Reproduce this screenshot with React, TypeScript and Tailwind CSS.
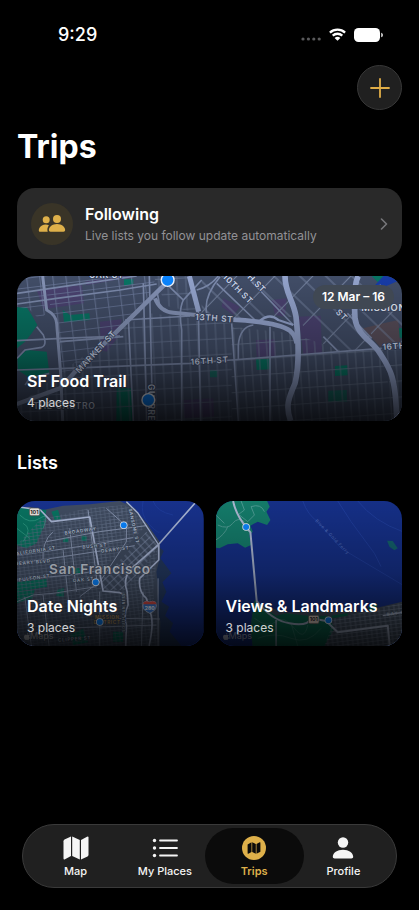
import React from 'react'

type Tab = {
  label: string
  icon: React.ReactNode
  active?: boolean
}

type PinProps = { x: number; y: number; r: number }

function Pin({ x, y, r }: PinProps) {
  return (
    <g>
      <circle cx={x} cy={y} r={r + r / 4} fill="#eef4ff" />
      <circle cx={x} cy={y} r={r} fill="#0a84ff" />
    </g>
  )
}

function StatusBar() {
  return (
    <div className="flex h-[65px] items-center justify-between pt-1 pr-9 pl-[58px]">
      <span className="text-lg leading-6 font-medium">9:29</span>
      <div className="flex items-center gap-2">
        <svg width="20" height="4" viewBox="0 0 20 4" className="mt-2" fill="#5a5a5c" aria-hidden="true">
          <circle cx="2" cy="2" r="1.6" />
          <circle cx="7.4" cy="2" r="1.6" />
          <circle cx="12.8" cy="2" r="1.6" />
          <circle cx="18.2" cy="2" r="1.6" />
        </svg>
        <svg width="17" height="13" viewBox="0 0 17 13" aria-hidden="true">
          <g fill="none" stroke="#fff" strokeWidth="2.3">
            <path d="M.9 4.6C5.1.7 11.9.7 16.1 4.6" />
            <path d="M3.7 7.6c2.7-2.5 6.9-2.5 9.6 0" />
          </g>
          <path d="M8.5 12.8 5.6 9.9c1.7-1.5 4.1-1.5 5.8 0z" fill="#fff" />
        </svg>
        <svg width="29" height="14" viewBox="0 0 29 14" fill="#fff" aria-hidden="true">
          <rect width="26" height="14" rx="4.5" />
          <path d="M27.3 4.7c2 .7 2 3.9 0 4.6z" />
        </svg>
      </div>
    </div>
  )
}

// streets are drawn at three units to the pixel
function MissionMap() {
  return (
    <svg
      className="absolute inset-0 h-full w-full"
      viewBox="21 18 1155 435"
      preserveAspectRatio="xMidYMid slice"
      fontFamily="Inter, sans-serif"
      aria-hidden="true"
    >
      <defs>
        <pattern id="west" width="39" height="29" patternUnits="userSpaceOnUse" patternTransform="rotate(-7)">
          <path d="M0 1h39M8 0v29" stroke="#6b7a9c" strokeWidth="2.5" />
        </pattern>
        <pattern id="mid" width="27" height="47" patternUnits="userSpaceOnUse" patternTransform="rotate(-3)">
          <path d="M0 4h27M12 0v47" stroke="#64728f" strokeWidth="2.5" />
        </pattern>
        <pattern id="east" width="24" height="48" patternUnits="userSpaceOnUse" patternTransform="rotate(-4)">
          <path d="M0 30h24M8 0v48" stroke="#66748f" strokeWidth="2.5" />
        </pattern>
        <pattern id="soma" width="82" height="54" patternUnits="userSpaceOnUse" patternTransform="rotate(44)">
          <path d="M0 3h82M10 0v54" stroke="#74829f" strokeWidth="3" />
        </pattern>
      </defs>
      <rect x="21" y="18" width="1155" height="435" fill="#414d67" />

      <g fill="#4a4270">
        <path d="M80 60 215 45 222 100 100 118z" />
        <path d="M230 45 385 18 330 18 225 35z" />
        <path d="M270 155 335 148 325 200 290 245 272 240z" />
        <path d="M738 210 795 208 797 260 740 262z" />
        <path d="M865 140 932 137 936 250 880 252z" />
        <path d="M785 90 830 85 825 140 795 135z" />
        <path d="M520 390 610 385 612 440 522 445z" />
        <path d="M640 85 690 110 670 135 635 110z" />
      </g>
      <g fill="#087363">
        <path d="M21 112 50 112 65 135 82 165 65 190 45 215 21 235z" />
        <path d="M22 265 50 240 110 245 118 310 60 325 24 300z" />
        <path d="M158 120 180 135 238 130 240 150 162 157z" />
        <path d="M342 28h28v15l-28 4z" />
        <path d="M738 268 780 266 782 298 740 300z" />
        <path d="M975 288 1012 286 1013 316 975 318z" />
        <path d="M320 355h45l2 98h-48z" />
        <path d="M955 362 1010 360 1011 395 955 396z" opacity=".7" />
        <path d="M1155 175h21v28h-21zM1085 18h40l-20 20z" />
        <path d="M600 300h22v22h-22z" opacity=".7" />
      </g>
      <path d="M1120 18h56v10l-56 24-25-6z" fill="#173ba5" />
      <path d="M1060 175 1120 160 1165 150 1170 215 1110 230z" fill="#574d59" />

      <path d="M95 18H440L400 120 330 170 200 300 155 310 135 155z" fill="url(#west)" />
      <path d="M21 18H95L112 125 90 150 60 120 21 110z" fill="url(#west)" />
      <path d="M150 310 340 170 420 130 665 160V453H30V400z" fill="url(#mid)" />
      <path d="M665 170 845 190 990 240 1120 240 1150 453H665z" fill="url(#east)" />
      <path d="M1130 240h46V453h-30z" fill="url(#east)" />
      <path d="M430 18h110l20 110-90-20z" fill="url(#mid)" />
      <path d="M575 18H1040L1030 130 1110 240 960 240 850 140 700 150 575 130z" fill="url(#soma)" />
      <path d="M1045 18h50L1176 140V230L1110 230 1040 130z" fill="url(#soma)" />

      <g fill="none" stroke="#7c8aac" strokeWidth="5">
        <path d="M21 70 240 38 380 18M21 102 140 85 330 60 440 42" />
        <path d="M21 212 155 205 330 198M150 215 340 200M355 143 370 453M418 18 428 453M400 40 410 453" />
        <path d="M21 300 150 296 540 280 665 270 1115 235" />
        <path d="M345 150 540 138M478 50 520 90 575 30M440 60 450 110" />
        <path d="M665 160 685 453M565 120 572 453M520 90Q505 120 515 180V453" />
        <path d="M685 270V225Q690 170 730 165M780 170V453" />
        <path d="M21 265 45 240 95 232Q112 225 100 195L80 170M118 310 60 325 45 345" />
        <path d="M590 130Q580 80 630 20M560 60Q600 50 625 18" />
        <path d="M720 30 850 165M620 40 735 150M940 200 985 245M1012 130 1085 205" />
      </g>
      <g fill="none" stroke="#8492b5" strokeWidth="9" strokeLinejoin="round">
        <path d="M98 18 110 120Q138 135 140 160L152 310 158 453" />
        <path d="M473 35 320 185 200 300 150 355 21 402" strokeWidth="13" />
        <path d="M435 85Q450 125 490 128L580 137" strokeWidth="12" />
      </g>
      <g fill="none" stroke="#93a3cc" strokeWidth="17" strokeLinejoin="round">
        <path d="M538 18 566 125" strokeWidth="15" />
        <path d="M825 18C825 70 850 90 858 140 868 230 867 290 855 340 835 385 826 410 842 453" />
        <path d="M670 149C740 153 810 160 840 182 855 195 858 205 860 220" strokeWidth="14" />
        <path d="M1045 18C1032 40 1032 90 1035 145 1040 195 1090 215 1110 250 1140 295 1158 320 1160 453" />
        <path d="M750 152Q780 128 805 150L850 165" strokeWidth="7" />
      </g>

      <g fill="#cfd9ee" stroke="#394660" strokeWidth="5" paintOrder="stroke" fontSize="25" fontWeight="600" letterSpacing="2">
        <text x="237" y="24">OAK ST</text>
        <text transform="translate(208 311) rotate(-47)">MARKET ST</text>
        <text transform="translate(555 149) rotate(4)">13TH ST</text>
        <text transform="translate(542 285) rotate(-4)">16TH ST</text>
        <text transform="translate(637 22) rotate(45)">10TH ST</text>
        <text transform="translate(680 -8) rotate(45)">11TH ST</text>
        <text transform="translate(976 128) rotate(45)">ST</text>
        <text transform="translate(1118 240) rotate(-4)">16TH ST</text>
        <text transform="translate(414 342) rotate(90)">GUERRERO</text>
        <text x="1054" y="123" fontSize="28" fill="#e7edf8">MISSION BAY</text>
        <text x="70" y="416" fontSize="26">THE CASTRO</text>
      </g>
      <Pin x={473} y={30} r={17} />
      <Pin x={415} y={390} r={17} />
    </svg>
  )
}

function CityMap() {
  return (
    <svg
      className="absolute inset-0 h-full w-full"
      viewBox="21 18 561 435"
      preserveAspectRatio="xMidYMid slice"
      fontFamily="Inter, sans-serif"
      aria-hidden="true"
    >
      <defs>
        <pattern id="blocks" width="13" height="10" patternUnits="userSpaceOnUse" patternTransform="rotate(-7)">
          <path d="M0 1h13M3 0v10" stroke="#606e86" strokeWidth="1.5" />
        </pattern>
        <pattern id="market" width="18" height="18" patternUnits="userSpaceOnUse" patternTransform="rotate(-43)">
          <path d="M0 1h18M3 0v18" stroke="#8593b0" strokeWidth="2" />
        </pattern>
      </defs>
      <rect x="21" y="18" width="561" height="435" fill="#17318b" />
      <g fill="none" stroke="#2140a0" strokeWidth="2">
        <path d="M400 18Q390 60 420 90T450 110M430 18Q440 50 490 60" />
      </g>
      <path d="M440 150 462 168 452 190 485 235 458 262 470 290 455 320 478 335 466 362 490 385 480 410 515 453H430z" fill="#23385f" />
      <path
        d="M21 40 60 35 100 45 160 32 240 28 330 18 375 40 410 85 450 140 450 190 440 230 446 290 440 330 452 380 450 453H21z"
        fill="#3f4b60"
      />
      <g fill="#08715f">
        <path d="M21 35 110 45 100 100 80 145 50 160 21 150z" />
        <path d="M21 260 110 252 112 275 21 290z" />
        <path d="M21 290 75 285 68 310 21 325z" />
        <path d="M160 128h16v14h-16zM215 122h16v16h-16zM186 222l22-4 4 16-20 4zM142 285l20-6v28l-22-4zM125 50l20-6 8 30-18 2z" />
        <path d="M180 420l40-18 15 40-45 8zM310 410h30v30h-30z" />
      </g>
      <path d="M90 75 240 38 355 30 445 150 430 290 450 453H21V150z" fill="url(#blocks)" />
      <path d="M350 18 415 90 450 155 345 285 275 285 270 262z" fill="#3f4b60" />
      <path d="M350 30 410 90 360 145 272 230 262 100z" fill="url(#blocks)" />
      <path d="M410 110 448 155 345 285 275 285 272 258z" fill="url(#market)" />
      <g fill="none" stroke="#3aa38b" strokeWidth="2">
        <path d="M30 60Q60 90 90 70T100 100M40 140Q70 100 40 85M21 100 60 130" />
      </g>

      <g fill="none" stroke="#8592ad" strokeWidth="3">
        <path d="M21 205 160 185 375 152M21 182 240 150 370 128M110 140 270 110 410 92M21 255 180 240 260 228" />
        <path d="M160 165 180 350M180 100 200 290M235 45 262 262M290 40 340 85M21 320 70 300 130 295 260 275" />
        <path d="M45 305 65 453M100 300 118 453M270 290V453M400 290 395 453M350 100V140L272 258 210 305" />
        <path d="M130 110Q95 140 100 200M300 370 450 372M150 400 440 390M445 250V453" />
      </g>
      <g fill="none" stroke="#a7b4d3" strokeWidth="5" strokeLinejoin="round">
        <path d="M21 35 92 45 125 80 240 66 280 288 330 293 345 300" />
        <path d="M556 24 445 150 365 220Q338 250 352 290L355 330Q340 360 350 390L348 453" />
        <path d="M447 150V195L390 250Q385 290 410 310L424 360Q432 390 418 453" />
        <path d="M350 20 385 55 447 150" strokeWidth="4" />
      </g>

      <g fill="#b4c0d6" stroke="#394559" strokeWidth="3" paintOrder="stroke" fontSize="14" fontWeight="600" letterSpacing="2">
        <text transform="translate(165 119) rotate(-8)">BROADWAY</text>
        <text transform="translate(218 161) rotate(-5)">BUSH ST</text>
        <text transform="translate(274 173) rotate(-7)">GEARY ST</text>
        <text transform="translate(8 183) rotate(-9)">CALIFORNIA ST</text>
        <text transform="translate(16 211) rotate(-5)">GEARY BLVD</text>
        <text transform="translate(28 260) rotate(-8)">FULTON ST</text>
        <text transform="translate(190 262) rotate(-6)">OAK ST</text>
        <text transform="translate(357 42) rotate(78)" fontSize="13">SANSOME ST</text>
        <text transform="translate(145 440) rotate(-4)">CLIPPER ST</text>
        <text transform="translate(346 410) rotate(-90)" fontSize="10">SOUTH VAN NESS</text>
        <text x="256" y="371" fill="#c19a5b">MISSION</text>
        <text x="252" y="387" fill="#c19a5b">DISTRICT</text>
      </g>
      <text x="118" y="236" fontSize="41" fontWeight="600" letterSpacing="2" fill="#c6ccd6" stroke="#3b465b" strokeWidth="4" paintOrder="stroke">
        San Francisco
      </text>
      <rect x="59" y="39" width="31" height="23" rx="5" fill="#e8e4dc" stroke="#4d4d4d" strokeWidth="2" />
      <text x="74" y="56" textAnchor="middle" fontSize="16" fontWeight="700" fill="#222">
        101
      </text>
      <path d="M402 322Q410 316 419 321 429 316 438 322 446 345 420 355 392 344 402 322z" fill="#3974c9" stroke="#cfd7e6" strokeWidth="2" />
      <path d="M400 328 402 322Q410 316 419 321 429 316 438 322L440 328z" fill="#d24a43" />
      <text x="420" y="344" textAnchor="middle" fontSize="15" fontWeight="700" fill="#fff">
        280
      </text>
      <Pin x={342} y={91} r={9} />
      <Pin x={258} y={262} r={9} />
      <Pin x={270} y={381} r={9} />
    </svg>
  )
}

function BayMap() {
  return (
    <svg
      className="absolute inset-0 h-full w-full"
      viewBox="24 18 561 435"
      preserveAspectRatio="xMidYMid slice"
      fontFamily="Inter, sans-serif"
      aria-hidden="true"
    >
      <defs>
        <pattern id="marina" width="15" height="11" patternUnits="userSpaceOnUse" patternTransform="rotate(-7)">
          <path d="M0 1h15M3 0v11" stroke="#77849c" strokeWidth="2" />
        </pattern>
      </defs>
      <rect x="24" y="18" width="561" height="435" fill="#152f86" />
      <g fill="none" stroke="#2443a0" strokeWidth="2">
        <path d="M285 18Q300 60 330 80L400 160 585 270M390 18 430 80 500 175 520 215M450 18Q500 80 585 110" />
      </g>
      <path
        d="M24 18H178L186 35 176 50 188 75 178 90 150 80 128 92 135 110 125 120 130 150 112 158 90 145 60 148 35 160 24 158z"
        fill="#147a69"
      />
      <path d="M538 137 555 138 570 160 560 166 545 155z" fill="#135f6a" />
      <g fill="none" stroke="#4c9990" strokeWidth="3">
        <path d="M30 90Q60 105 75 85T110 80M24 135Q50 120 60 95M95 60 120 80 140 60 130 35Q160 25 170 50M100 18 110 45 90 60M24 60 50 85" />
      </g>
      <path d="M140 320 165 330 230 352 300 350 380 345 460 350 520 335 585 320V453H135L128 400z" fill="#424e60" />
      <path d="M140 315 165 335 205 362 235 355 300 362 360 362 380 400 350 453H135L128 400z" fill="#0c6952" />
      <path d="M380 370 470 352 585 322V453H350z" fill="url(#marina)" />
      <path d="M480 335l30-8-5 20-20 2zM370 362l50-8v8l-45 8z" fill="#0c6952" />
      <g fill="none" stroke="#3f8a79" strokeWidth="2">
        <path d="M140 370Q180 400 205 380T260 400 300 390M150 430Q200 410 250 430T340 400M250 385 270 453" />
      </g>
      <g fill="none" stroke="#a9b5cf" strokeWidth="6" strokeLinejoin="round">
        <path d="M76 18Q85 60 115 96L128 112 147 320 160 340" />
        <path d="M147 318Q190 375 245 385T310 370L355 378 390 412 540 392 546 453" />
        <path d="M205 375V453M525 362 585 352" strokeWidth="4" />
      </g>
      <text transform="translate(322 78) rotate(46)" fontSize="13" letterSpacing="2" fill="#4f6bb8">
        Blue &amp; Gold Ferry
      </text>
      <text transform="translate(538 363) rotate(-8)" fontSize="13" fontWeight="600" letterSpacing="3" fill="#b4c0d6">
        BAY ST
      </text>
      <rect x="302" y="361" width="32" height="25" rx="5" fill="#e6d3c9" stroke="#4d4d4d" strokeWidth="2" />
      <text x="318" y="379" textAnchor="middle" fontSize="16" fontWeight="700" fill="#222">
        101
      </text>
      <Pin x={115} y={96} r={9} />
      <Pin x={362} y={376} r={9} />
    </svg>
  )
}

type MapCardProps = {
  title: string
  places: string
  map: React.ReactNode
  badge?: string
  credit?: boolean
}

function MapCard({ title, places, map, badge, credit }: MapCardProps) {
  return (
    <a href="#" className="relative flex h-[145px] min-w-0 flex-1 flex-col justify-end overflow-hidden rounded-[18px] px-[10px] pb-2">
      {map}
      {credit ? (
        <span className="absolute bottom-1 left-[7px] flex items-center text-[9px] leading-3 text-white/70">
          <svg width="6" height="7" viewBox="0 0 12 14" fill="currentColor" aria-hidden="true">
            <path d="M8.6 0C8.8 1.6 7.4 3 6 3 5.8 1.500 7.300.2 8.600 0z" />
            <path d="M11.300 4.800C9.300 6 9.600 8.900 11.900 9.700 10.900 12.300 9.600 14 8.300 14c-.8 0-1.200-.5-2.200-.5S4.700 14 3.900 14C2 14 0 10.600 0 7.900 0 3.900 3.100 2.900 5 3.900c.8.4 1.400.4 2.300 0 1.400-.6 3.100-.3 4 .9z" />
          </svg>
          Maps
        </span>
      ) : null}
      <div className="absolute inset-0 bg-gradient-to-b from-black/0 via-black/25 to-black/80" />
      {badge ? (
        <span className="absolute top-[9px] right-2 rounded-full bg-[#404853] px-[9px] py-1 text-xs leading-4 font-semibold">
          {badge}
        </span>
      ) : null}
      <h3 className="relative truncate text-base leading-6 font-semibold">{title}</h3>
      <p className="relative text-xs leading-5 text-white/80">{places}</p>
    </a>
  )
}

function MapIcon() {
  return (
    <svg width="26" height="24" viewBox="0 0 26 24" fill="currentColor" aria-hidden="true">
      <path d="M.5 5.2Q.5 4 1.5 3.5L8 .4V20L2 23.3Q.5 24 .5 22.4z" />
      <path d="M9.2.4 16.8 4V23.6L9.2 20z" />
      <path d="M18 4 24 .7Q25.5 0 25.5 1.6V18.8Q25.5 20 24.5 20.5L18 23.6z" />
    </svg>
  )
}

function ListIcon() {
  return (
    <svg width="26" height="24" viewBox="0 0 26 24" fill="currentColor" aria-hidden="true">
      <circle cx="2.5" cy="4.5" r="1.7" />
      <circle cx="2.5" cy="12" r="1.7" />
      <circle cx="2.5" cy="19.5" r="1.7" />
      <path d="M8 4.5h17M8 12h17M8 19.5h17" stroke="currentColor" strokeWidth="1.8" strokeLinecap="round" />
    </svg>
  )
}

function TripsIcon() {
  return (
    <svg width="26" height="24" viewBox="0 0 26 24" aria-hidden="true">
      <circle cx="13" cy="12" r="12" fill="currentColor" />
      <g fill="#0b0b0b">
        <path d="M6.6 8.4 10.5 6.2V15.9L7.3 17.7Q6.6 18 6.6 17.3z" />
        <path d="M11.2 6.2 14.8 8.1V17.8L11.2 15.9z" />
        <path d="M15.5 8.1 18.7 6.3Q19.4 6 19.4 6.8V15.7L15.5 17.8z" />
      </g>
    </svg>
  )
}

function ProfileIcon() {
  return (
    <svg width="26" height="24" viewBox="0 0 26 24" fill="currentColor" aria-hidden="true">
      <circle cx="13" cy="6.5" r="5.2" />
      <path d="M2.8 20.8C2.8 16.8 7.3 13.7 13 13.7s10.2 3.1 10.2 7.1c0 1.2-.7 1.7-1.9 1.7H4.7c-1.2 0-1.9-.5-1.9-1.7z" />
    </svg>
  )
}

const tabs: Tab[] = [
  { label: 'Map', icon: <MapIcon /> },
  { label: 'My Places', icon: <ListIcon /> },
  { label: 'Trips', icon: <TripsIcon />, active: true },
  { label: 'Profile', icon: <ProfileIcon /> },
]

function TabBar() {
  return (
    <nav className="mx-[22px] mt-auto mb-[22px] flex h-16 rounded-full border border-[#3a3a3a] bg-[#202020] px-2 py-[3px]">
      {tabs.map((t) => (
        <button
          key={t.label}
          type="button"
          aria-current={t.active ? 'page' : undefined}
          className={
            'flex flex-1 basis-0 flex-col items-center gap-[3px] rounded-full pt-2 ' +
            (t.active ? '-mx-[5px] bg-[#0b0b0b] px-[5px] text-[#deb04a]' : 'text-[#f5f5f5]')
          }
        >
          {t.icon}
          <span className={'text-[11px] leading-4 whitespace-nowrap ' + (t.active ? 'font-semibold' : 'font-medium')}>
            {t.label}
          </span>
        </button>
      ))}
    </nav>
  )
}

export default function App() {
  return (
    <div className="flex min-h-screen flex-col bg-black font-[Inter,sans-serif] text-white">
      <StatusBar />
      <main className="flex flex-col px-[17px]">
        <button
          type="button"
          aria-label="Add trip"
          className="flex size-[45px] items-center justify-center self-end rounded-full border border-[#383838] bg-[#202020]"
        >
          <svg width="20" height="20" viewBox="0 0 20 20" stroke="#e0ad47" strokeWidth="1.8" strokeLinecap="round" aria-hidden="true">
            <path d="M10 1v18M1 10h18" />
          </svg>
        </button>
        <h1 className="mt-4 text-[32px] leading-[42px] font-bold">Trips</h1>

        <a href="#" className="mt-5 flex h-[71px] items-center gap-3 rounded-[18px] bg-[#292929] px-[14px]">
          <span className="flex size-[42px] shrink-0 items-center justify-center rounded-full bg-[#393427]">
            <svg width="28" height="20" viewBox="0 0 28 20" fill="#deb04a" aria-hidden="true">
              <circle cx="8.2" cy="5.8" r="3.5" />
              <path d="M10.9 11.3C8.8 10.3 5.9 10.4 3.9 11.5 1.9 12.6.8 14.5.8 16.3c0 1 .5 1.5 1.5 1.5h7.4c-.8-2.3-.1-4.8 1.2-6.5z" />
              <circle cx="19" cy="5" r="4" />
              <path d="M10.9 16.1c0-3.2 3.5-6 8.1-6s8.1 2.8 8.1 6c0 1.2-.5 1.7-1.6 1.7h-13c-1.1 0-1.6-.5-1.6-1.7z" />
            </svg>
          </span>
          <span className="min-w-0 flex-1">
            <span className="block text-base leading-6 font-semibold">Following</span>
            <span className="block text-xs leading-5 text-[#929296]">Live lists you follow update automatically</span>
          </span>
          <svg width="8" height="12" viewBox="0 0 8 12" fill="none" stroke="#77777a" strokeWidth="1.6" strokeLinecap="round" strokeLinejoin="round" aria-hidden="true">
            <path d="m1.5 1 5 5-5 5" />
          </svg>
        </a>

        <section className="mt-[17px] flex">
          <MapCard title="SF Food Trail" places="4 places" badge="12 Mar – 16" map={<MissionMap />} />
        </section>

        <h2 className="mt-7 text-lg leading-7 font-semibold">Lists</h2>
        <section className="mt-6 flex gap-3">
          <MapCard title="Date Nights" places="3 places" credit map={<CityMap />} />
          <MapCard title="Views & Landmarks" places="3 places" credit map={<BayMap />} />
        </section>
      </main>
      <TabBar />
    </div>
  )
}
